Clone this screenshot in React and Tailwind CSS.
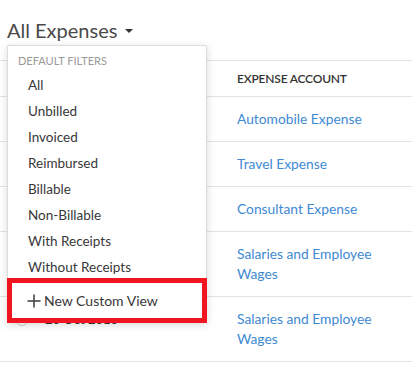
const filters = [
  'All',
  'Unbilled',
  'Invoiced',
  'Reimbursed',
  'Billable',
  'Non-Billable',
  'With Receipts',
  'Without Receipts',
];

// only the last row's date peeks out from under the menu
const rows = [
  { account: ['Automobile Expense'], h: 'h-[45px]' },
  { account: ['Travel Expense'], h: 'h-[45px]' },
  { account: ['Consultant Expense'], h: 'h-[45px]' },
  { account: ['Salaries and Employee', 'Wages'], h: 'h-[65px]' },
  { date: '20 Oct 2016', account: ['Salaries and Employee', 'Wages'], h: 'h-[65px]' },
];

export default function App() {
  return (
    <div className="relative w-[412px] h-[368px] overflow-hidden bg-white font-['Lato',sans-serif]">
      {/* Title */}
      <div className="h-[60px] pl-[7px] pt-[16px] flex items-start">
        <span className="text-[20px] leading-[28px] text-[#4a4a4a]">All Expenses</span>
        <span className="ml-[8px] mt-[13px] w-0 h-0 border-l-[4px] border-r-[4px] border-t-[4px] border-l-transparent border-r-transparent border-t-[#333]" />
      </div>

      {/* Table */}
      <div className="border-t border-[#e3e3e3]">
        <div className="h-[36px] flex items-center border-b border-[#e3e3e3]">
          <div className="w-[237px]" />
          <div className="text-[12px] tracking-[-0.2px] font-semibold text-[#333]">EXPENSE ACCOUNT</div>
        </div>
        {rows.map((r, i) => (
          <div key={i} className={`${r.h} flex items-start pt-[12px] border-b border-[#e3e3e3]`}>
            <div className="w-[237px] flex items-center gap-[16px] pl-[15px]">
              {r.date && (
                <>
                  <span className="w-[14px] h-[14px] rounded-full border border-[#cfcfcf]" />
                  <span className="text-[13px] leading-[20px] font-semibold text-[#333]">{r.date}</span>
                </>
              )}
            </div>
            <div className="text-[13.8px] leading-[20px] text-[#4089d3]">
              {r.account.map((t, j) => (
                <div key={j}>{t}</div>
              ))}
            </div>
          </div>
        ))}
      </div>

      {/* Dropdown */}
      <div className="absolute left-[7px] top-[45px] w-[200px] h-[278px] bg-white border border-[#dcdcdc] rounded-[2px] shadow-[0_2px_8px_rgba(0,0,0,0.15)]">
        <div className="pl-[10px] pt-[7px] pb-[3px] text-[11px] leading-[16px] text-[#9a9a9a]">DEFAULT FILTERS</div>
        {filters.map(f => (
          <div key={f} className="pl-[20px] h-[26px] leading-[26px] text-[13.5px] text-[#383838]">{f}</div>
        ))}
      </div>

      {/* Highlighted new view */}
      <div className="absolute left-[7px] top-[278px] w-[200px] h-[45px] border-[5px] border-[#f0151f] bg-white flex items-center pl-[15px]">
        <svg width="14" height="14" viewBox="0 0 14 14" stroke="#3a3a3a" strokeWidth="1.5" fill="none">
          <line x1="7" y1="0.5" x2="7" y2="13.5" />
          <line x1="0.5" y1="7" x2="13.5" y2="7" />
        </svg>
        <span className="ml-[3px] text-[14px] text-[#383838]">New Custom View</span>
      </div>
    </div>
  );
}
